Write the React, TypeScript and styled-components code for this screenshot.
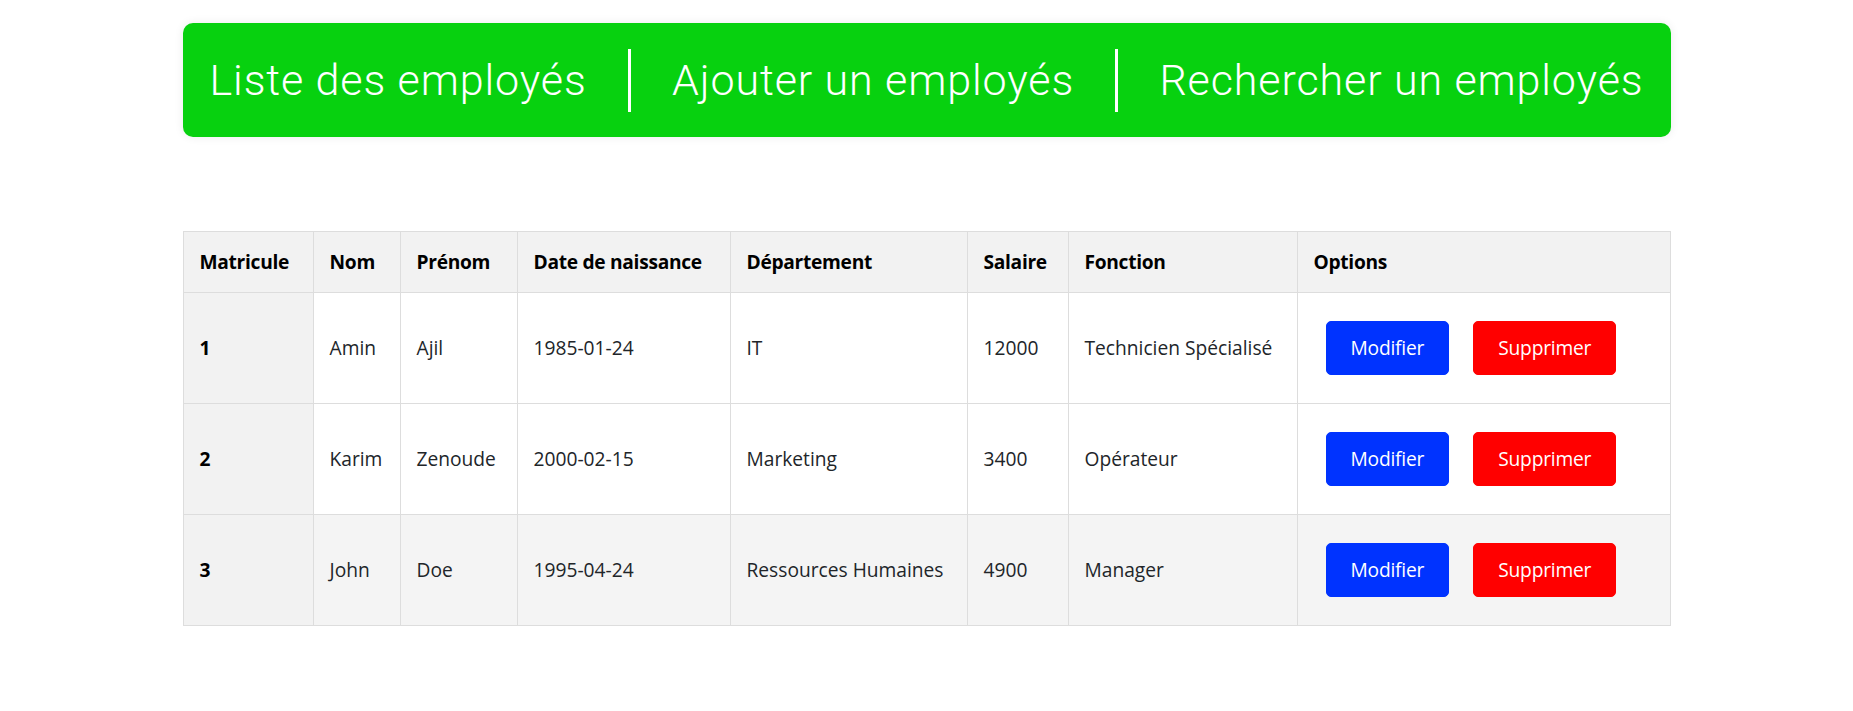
import React from 'react'
import styled, { createGlobalStyle } from 'styled-components'

const GlobalStyle = createGlobalStyle`
  body {
    margin: 0;
    background: #ffffff;
    font-family: 'Open Sans', 'Noto Sans', sans-serif;
  }
`

type Employee = {
  id: number
  nom: string
  prenom: string
  naissance: string
  departement: string
  salaire: number
  fonction: string
}

const employees: Employee[] = [
  { id: 1, nom: 'Amin', prenom: 'Ajil', naissance: '1985-01-24', departement: 'IT', salaire: 12000, fonction: 'Technicien Spécialisé' },
  { id: 2, nom: 'Karim', prenom: 'Zenoude', naissance: '2000-02-15', departement: 'Marketing', salaire: 3400, fonction: 'Opérateur' },
  { id: 3, nom: 'John', prenom: 'Doe', naissance: '1995-04-24', departement: 'Ressources Humaines', salaire: 4900, fonction: 'Manager' },
]

// column widths measured off the layout
const columns: [string, number][] = [
  ['Matricule', 130],
  ['Nom', 87],
  ['Prénom', 117],
  ['Date de naissance', 213],
  ['Département', 237],
  ['Salaire', 101],
  ['Fonction', 229],
  ['Options', 373],
]

const Page = styled.div`
  width: 1488px;
  margin: 0 auto;
  padding-top: 23px;
`

const NavBar = styled.nav`
  display: flex;
  align-items: center;
  justify-content: space-between;
  height: 114px;
  padding: 0 27px;
  box-sizing: border-box;
  background: #07d10f;
  border-radius: 10px;
  box-shadow: 0 0 10px rgba(0, 0, 0, 0.08);
`

const NavLink = styled.a`
  font-family: 'Roboto', 'Liberation Sans', sans-serif;
  font-weight: 300;
  font-size: 43px;
  letter-spacing: 0.9px;
  color: #ffffff;
  text-decoration: none;
  cursor: pointer;
  white-space: nowrap;
`

const Divider = styled.span`
  display: block;
  width: 3px;
  height: 63px;
  background: #ffffff;
`

const Table = styled.table`
  margin-top: 94px;
  width: 100%;
  border-collapse: collapse;
  table-layout: fixed;
  font-size: 19.2px;
  line-height: 28px;
`

const Col = styled.col<{ $w: number }>`
  width: ${p => p.$w}px;
`

const HeadRow = styled.tr`
  background: #f2f2f2;
`

const Row = styled.tr<{ $hover?: boolean }>`
  background: ${p => (p.$hover ? '#f4f4f4' : '#ffffff')};
`

const HeadCell = styled.th`
  padding: 16px;
  border: 1px solid #dddddd;
  text-align: left;
  font-weight: 700;
  letter-spacing: -0.3px;
  color: #000000;
  white-space: nowrap;
`

const RowHead = styled.th`
  padding: 16px;
  border: 1px solid #dddddd;
  text-align: left;
  font-weight: 700;
  color: #000000;
  background: #f2f2f2;
`

const Cell = styled.td`
  padding: 16px;
  border: 1px solid #dddddd;
  color: #212529;
  white-space: nowrap;
`

const Button = styled.button<{ $danger?: boolean }>`
  display: inline-block;
  margin: 12px;
  padding: 12px 24px;
  border: 1px solid ${p => (p.$danger ? '#ff0000' : '#0033ff')};
  border-radius: 5px;
  background: ${p => (p.$danger ? '#ff0000' : '#0033ff')};
  color: #ffffff;
  font-family: inherit;
  font-size: 19.2px;
  line-height: 28px;
  letter-spacing: -0.2px;
  cursor: pointer;
`

export default function App() {
  return (
    <Page>
      <GlobalStyle />
      <NavBar>
        <NavLink>Liste des employés</NavLink>
        <Divider />
        <NavLink>Ajouter un employés</NavLink>
        <Divider />
        <NavLink>Rechercher un employés</NavLink>
      </NavBar>

      <Table>
        <colgroup>
          {columns.map(([label, w]) => <Col key={label} $w={w} />)}
        </colgroup>
        <thead>
          <HeadRow>
            {columns.map(([label]) => <HeadCell key={label}>{label}</HeadCell>)}
          </HeadRow>
        </thead>
        <tbody>
          {employees.map((e, i) => (
            <Row key={e.id} $hover={i === employees.length - 1}>
              <RowHead>{e.id}</RowHead>
              <Cell>{e.nom}</Cell>
              <Cell>{e.prenom}</Cell>
              <Cell>{e.naissance}</Cell>
              <Cell>{e.departement}</Cell>
              <Cell>{e.salaire}</Cell>
              <Cell>{e.fonction}</Cell>
              <Cell>
                <Button>Modifier</Button>
                <Button $danger>Supprimer</Button>
              </Cell>
            </Row>
          ))}
        </tbody>
      </Table>
    </Page>
  )
}
